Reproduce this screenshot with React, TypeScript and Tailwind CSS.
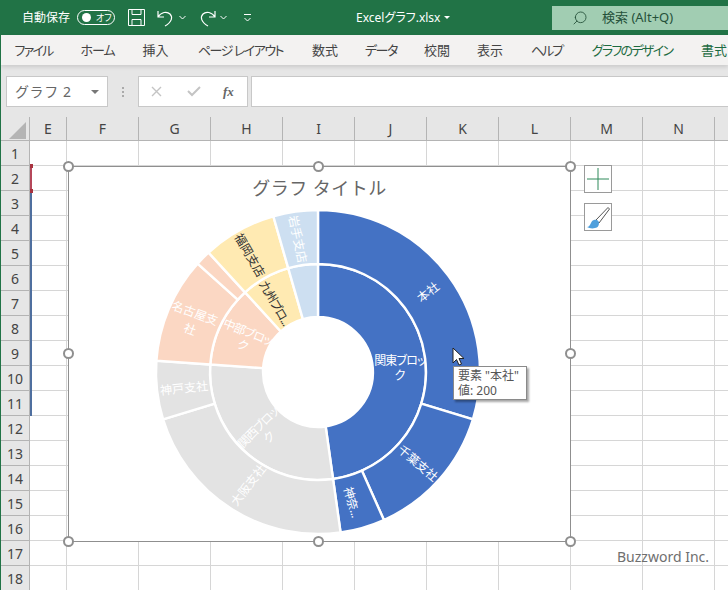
import { Search } from "lucide-react";

const tabs = [
  { t: "ファイル", cls: "w-[39px] tracking-[-1.8px]" },
  { t: "ホーム", cls: "w-[35px] tracking-[-1px]" },
  { t: "挿入", cls: "w-[27px]" },
  { t: "ページ レイアウト", cls: "w-[89px] tracking-[-1.5px]" },
  { t: "数式", cls: "w-[26px]" },
  { t: "データ", cls: "w-[32px] tracking-[-1.3px]" },
  { t: "校閲", cls: "w-[26px]" },
  { t: "表示", cls: "w-[26px]" },
  { t: "ヘルプ", cls: "w-[33px] tracking-[-2px]" },
  { t: "グラフのデザイン", cls: "w-[84px] tracking-[-1.7px] text-[#1d6b41]" },
  { t: "書式", cls: "w-[26px] text-[#1d6b41]" },
];
const columns = ["E", "F", "G", "H", "I", "J", "K", "L", "M", "N", ""];
const rows = Array.from({ length: 18 }, (_, i) => i + 1);

// chart centre inside the chart frame
const CX = 250;
const CY = 206;

function arc(r0: number, r1: number, a0: number, a1: number) {
  const pt = (r: number, a: number) => {
    const t = ((a - 90) * Math.PI) / 180;
    return `${(CX + r * Math.cos(t)).toFixed(2)} ${(CY + r * Math.sin(t)).toFixed(2)}`;
  };
  const large = a1 - a0 > 180 ? 1 : 0;
  return `M${pt(r0, a0)} L${pt(r1, a0)} A${r1} ${r1} 0 ${large} 1 ${pt(r1, a1)} L${pt(r0, a1)} A${r0} ${r0} 0 ${large} 0 ${pt(r0, a0)}Z`;
}

const slices = [
  { r: [55, 108], a: [0, 172], fill: "#4472c4" },
  { r: [55, 108], a: [172, 274], fill: "#e3e3e3" },
  { r: [55, 108], a: [274, 317.5], fill: "#fbd7c3" },
  { r: [55, 108], a: [317.5, 344], fill: "#ffeab2" },
  { r: [55, 108], a: [344, 360], fill: "#cddff1" },
  { r: [108, 162], a: [0, 107], fill: "#4472c4" },
  { r: [108, 162], a: [107, 156], fill: "#4472c4" },
  { r: [108, 162], a: [156, 172], fill: "#4472c4" },
  { r: [108, 162], a: [172, 253], fill: "#e3e3e3" },
  { r: [108, 162], a: [253, 274], fill: "#e3e3e3" },
  { r: [108, 162], a: [274, 312], fill: "#fbd7c3" },
  { r: [108, 162], a: [312, 317.5], fill: "#fbd7c3" },
  { r: [108, 162], a: [317.5, 344], fill: "#ffeab2" },
  { r: [108, 162], a: [344, 360], fill: "#cddff1" },
];

// page coordinates, frame offset is taken off when drawn
const labels = [
  { t: "本社", x: 428, y: 292, rot: -38, fill: "#fff", ls: 0 },
  { t: "千葉支社", x: 418, y: 463, rot: 40, fill: "#fff", ls: 0 },
  { t: "神奈...", x: 352, y: 502, rot: 74, fill: "#fff", ls: -0.5 },
  { t: "関東ブロッ", x: 400, y: 360, rot: 0, fill: "#fff", ls: -0.8 },
  { t: "ク", x: 400, y: 375, rot: 0, fill: "#fff", ls: 0 },
  { t: "大阪支社", x: 248, y: 485, rot: -52, fill: "#fff", ls: 0 },
  { t: "神戸支社", x: 184, y: 388, rot: -6, fill: "#fff", ls: 0 },
  { t: "関西ブロッ", x: 258, y: 427, rot: -45, fill: "#fff", ls: -0.8 },
  { t: "ク", x: 269, y: 437, rot: -45, fill: "#fff", ls: 0 },
  { t: "名古屋支", x: 195, y: 313, rot: 20, fill: "#fff", ls: 0 },
  { t: "社", x: 190, y: 329, rot: 20, fill: "#fff", ls: 0 },
  { t: "中部ブロッ", x: 248, y: 332, rot: 22, fill: "#fff", ls: -0.8 },
  { t: "ク", x: 243, y: 345, rot: 22, fill: "#fff", ls: 0 },
  { t: "福岡支店", x: 250, y: 255, rot: 60, fill: "#333", ls: 0 },
  { t: "九州ブロ...", x: 275, y: 303, rot: 60, fill: "#333", ls: -1 },
  { t: "岩手支店", x: 298, y: 239, rot: 78, fill: "#fff", ls: 0 },
];

function Handle({ className }: { className: string }) {
  return <span className={`absolute w-[11px] h-[11px] -ml-[6.5px] -mt-[6.5px] rounded-full bg-white border-2 border-[#8f8f8f] ${className}`} />;
}

function TitleBar() {
  return (
    <div className="flex items-center h-[35px] bg-[#217346] text-white text-[12px] shrink-0">
      <span className="ml-[22px] w-[48px] whitespace-nowrap">自動保存</span>
      <span className="ml-[7px] w-[38px] h-[15px] rounded-full border border-white flex items-center pl-[4px]">
        <span className="w-[9px] h-[9px] rounded-full bg-white" />
        <span className="ml-[5px] text-[9px] leading-none whitespace-nowrap [font-feature-settings:'palt']">オフ</span>
      </span>
      <svg className="ml-[13px]" width="17" height="17" viewBox="0 0 17 17" fill="none" stroke="#fff" strokeWidth="1">
        <path d="M.5.5h16v16H.5zM4 .5v5h9v-5M4 16.5v-6h9v6" />
      </svg>
      <svg className="ml-[12px]" width="17" height="18" viewBox="0 0 17 18" fill="none" stroke="#fff" strokeWidth="1.2">
        <path d="M1 2v6h6M1 8c3-5 9-6 12-3 3 3 2 8-5 12" />
      </svg>
      <svg className="ml-[5px]" width="7" height="5" viewBox="0 0 7 5" fill="none" stroke="#fff"><path d="M.5 1l3 3 3-3" /></svg>
      <svg className="ml-[13px]" width="17" height="18" viewBox="0 0 17 18" fill="none" stroke="#fff" strokeWidth="1.2">
        <path d="M16 2v6h-6M16 8c-3-5-9-6-12-3-3 3-2 8 5 12" />
      </svg>
      <svg className="ml-[4px]" width="7" height="5" viewBox="0 0 7 5" fill="none" stroke="#fff"><path d="M.5 1l3 3 3-3" /></svg>
      <svg className="ml-[17px]" width="7" height="8" viewBox="0 0 7 8" fill="none" stroke="#fff"><path d="M0 .5h7M.5 4l3 3 3-3" /></svg>
      <span className="ml-[105px] w-[82px] whitespace-nowrap [font-feature-settings:'palt']">Excelグラフ.xlsx</span>
      <span className="ml-[6px] w-0 h-0 border-x-[3px] border-x-transparent border-t-[3px] border-t-white" />
      <div className="ml-[102px] flex-1 h-[24px] bg-[#a1cdb2] flex items-center text-[#25513a]">
        <Search className="ml-[20px] -scale-x-100" size={16} strokeWidth={1.3} />
        <span className="ml-[14px] text-[13px] whitespace-nowrap">検索 (Alt+Q)</span>
      </div>
    </div>
  );
}

function Ribbon() {
  return (
    <div className="flex items-center h-[30px] pl-[13px] pt-px gap-[27px] bg-[#f3f2f1] text-[13px] text-[#444] whitespace-nowrap shrink-0 ml-px shadow-[0_2px_4px_rgba(0,0,0,0.12)] relative [font-feature-settings:'palt']">
      {tabs.map((tab) => (
        <span key={tab.t} className={`flex justify-center shrink-0 ${tab.cls}`}>
          {tab.t}
        </span>
      ))}
    </div>
  );
}

function FormulaBar() {
  return (
    <div className="flex items-center h-[52px] pt-px bg-[#e6e6e6] shrink-0 ml-px">
      <div className="ml-[5px] w-[102px] h-[31px] bg-white border border-[#c8c8c8] flex items-center pl-[8px] text-[14px] text-[#666]">
        <span className="tracking-[0.6px] whitespace-nowrap">グラフ 2</span>
        <span className="ml-auto mr-[8px] w-0 h-0 border-x-[4px] border-x-transparent border-t-[4px] border-t-[#777]" />
      </div>
      <div className="ml-[14px] flex flex-col gap-[2px]">
        <span className="w-[2px] h-[2px] bg-[#aaa]" />
        <span className="w-[2px] h-[2px] bg-[#aaa]" />
        <span className="w-[2px] h-[2px] bg-[#aaa]" />
      </div>
      <div className="ml-[14px] w-[110px] h-[31px] bg-white border border-[#c8c8c8] flex items-center">
        <svg className="ml-[12px]" width="11" height="11" viewBox="0 0 11 11" stroke="#c4c4c4" strokeWidth="1.4"><path d="M1 1l9 9M10 1l-9 9" /></svg>
        <svg className="ml-[25px]" width="14" height="11" viewBox="0 0 14 11" fill="none" stroke="#c4c4c4" strokeWidth="2"><path d="M1 5l4 4 8-8" /></svg>
        <span className="ml-[22px] font-['Liberation_Serif',serif] italic font-bold text-[13px] text-[#666]">fx</span>
      </div>
      <div className="ml-[3px] flex-1 h-[31px] bg-white border-y border-l border-[#c8c8c8]" />
    </div>
  );
}

function Sheet() {
  return (
    <div className="flex-1 flex flex-col ml-px">
      <div className="flex h-[24px] bg-[#e6e6e6] border-b border-[#b4b4b4] shrink-0">
        <div className="w-[29px] shrink-0 h-full flex items-end justify-end pr-[3px] pb-px border-r border-[#b4b4b4]">
          <svg width="17" height="17" viewBox="0 0 17 17"><path d="M0 17L17 0v17z" fill="#b4b4b4" /></svg>
        </div>
        {columns.map((c, i) => (
          <div
            key={c}
            className={`${i === 0 ? "w-[37px]" : "w-[72px]"} shrink-0 flex items-center justify-center border-r border-[#b4b4b4] text-[14px] text-[#444]`}
          >
            {c}
          </div>
        ))}
      </div>
      {rows.map((r) => (
        <div key={r} className="flex h-[25px] shrink-0 bg-white">
          <div className="w-[29px] shrink-0 flex items-center justify-center bg-[#e6e6e6] border-r border-b border-[#b4b4b4] text-[14px] text-[#444]">
            {r}
          </div>
          {columns.map((c, i) => (
            <div key={c} className={`${i === 0 ? "w-[37px]" : "w-[72px]"} shrink-0 border-r border-b border-[#d6d6d6]`} />
          ))}
        </div>
      ))}
    </div>
  );
}

function Chart() {
  return (
    <div className="absolute left-[68px] top-[166px] w-[503px] h-[376px] bg-white border border-[#8f8f8f]">
      <div className="mt-[9px] text-center text-[18px] leading-[24px] tracking-[0.5px] text-[#666]">グラフ タイトル</div>
      <svg className="absolute -left-px -top-px [font-feature-settings:'palt']" width="503" height="376" viewBox="0 0 503 376">
        {slices.map((s, i) => (
          <path key={i} d={arc(s.r[0], s.r[1], s.a[0], s.a[1])} fill={s.fill} stroke="#fff" strokeWidth="2.4" />
        ))}
        {labels.map((l) => (
          <text
            key={l.t + l.x}
            x={l.x - 68}
            y={l.y - 166}
            fill={l.fill}
            fontSize="12"
            letterSpacing={l.ls}
            textAnchor="middle"
            dominantBaseline="central"
            transform={`rotate(${l.rot} ${l.x - 68} ${l.y - 166})`}
          >
            {l.t}
          </text>
        ))}
      </svg>
      <Handle className="left-0 top-0" />
      <Handle className="left-[250px] top-0" />
      <Handle className="left-[502px] top-0" />
      <Handle className="left-0 top-[187px]" />
      <Handle className="left-[502px] top-[187px]" />
      <Handle className="left-0 top-[375px]" />
      <Handle className="left-[250px] top-[375px]" />
      <Handle className="left-[502px] top-[375px]" />
    </div>
  );
}

export default function App() {
  return (
    <div className="relative w-[728px] h-[590px] overflow-hidden flex flex-col bg-[#e6e6e6] font-['Noto_Sans','Noto_Sans_CJK_JP',sans-serif]">
      <TitleBar />
      <Ribbon />
      <FormulaBar />
      <Sheet />

      {/* window edge and data range marks */}
      <div className="absolute left-0 top-[35px] bottom-0 w-px bg-[#217346]" />
      <div className="absolute left-[30px] top-[192px] h-[224px] w-[2px] bg-[#4f6f9f]" />
      <div className="absolute left-[30px] top-[164px] h-[28px] w-[2px] bg-[#b5475a]" />
      <div className="absolute left-[30px] top-[164px] h-[4px] w-[3px] bg-[#a8323f]" />
      <div className="absolute left-[30px] top-[189px] h-[4px] w-[3px] bg-[#a8323f]" />

      <Chart />

      {/* chart side buttons */}
      <div className="absolute left-[584px] top-[165px] w-[28px] h-[28px] bg-white border border-[#9a9a9a] flex items-center justify-center">
        <svg width="22" height="22" viewBox="0 0 22 22" stroke="#2f8a5b" strokeWidth="1"><path d="M11 0v22M0 11h22" /></svg>
      </div>
      <div className="absolute left-[584px] top-[203px] w-[28px] h-[28px] bg-white border border-[#9a9a9a] flex items-center justify-center">
        <svg width="25" height="25" viewBox="0 0 25 25">
          <path d="M10 15L22 2.5l1.5 1.5L13 18z" fill="#fff" stroke="#555" strokeWidth="1" />
          <path d="M1 22c4 0 3-6 7-7 3-1 5 1 5 3 0 2-1 5-4 5-3 1-6 0-8-1z" fill="#4e9fdc" />
        </svg>
      </div>

      {/* tooltip */}
      <div className="absolute left-[453px] top-[366px] w-[74px] h-[34px] bg-white border border-[#8a8a8a] shadow-[2px_2px_2px_rgba(0,0,0,0.35)] px-[4px] pt-px text-[12px] leading-[15px] text-[#555] whitespace-nowrap">
        <div>要素 "本社"</div>
        <div>値: 200</div>
      </div>

      {/* mouse cursor */}
      <svg className="absolute left-[452px] top-[347px]" width="13" height="20" viewBox="0 0 13 20">
        <path d="M1 1v15l3.5-3.5L7 18l2.5-1-2.5-5.5h5z" fill="#fff" stroke="#222" strokeWidth="1" />
      </svg>

      <div className="absolute left-[617px] top-[547px] text-[14px] leading-[20px] text-[#6f6f6f] whitespace-nowrap">Buzzword Inc.</div>
    </div>
  );
}
